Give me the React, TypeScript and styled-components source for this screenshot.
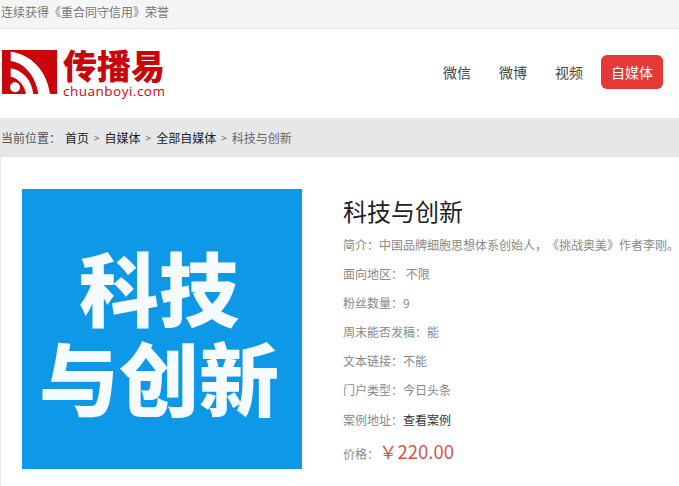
import React from "react";
import styled, { createGlobalStyle } from "styled-components";

const GlobalStyle = createGlobalStyle`
  * {
    box-sizing: border-box;
  }
  body {
    margin: 0;
    background: #ffffff;
    font-family: "Noto Sans CJK SC", "Noto Sans", sans-serif;
    overflow: hidden;
  }
`;

const infoRows = [
  { label: "面向地区：", value: " 不限" },
  { label: "粉丝数量：", value: "9" },
  { label: "周末能否发稿：", value: "能" },
  { label: "文本链接：", value: "不能" },
  { label: "门户类型：", value: "今日头条" },
];

const App = () => {
  return (
    <Page>
      <GlobalStyle />
      <TopBar>连续获得《重合同守信用》荣誉</TopBar>
      <Header>
        <Logo>
          <LogoIcon viewBox="0 0 55 44" aria-hidden="true">
            <rect width="55" height="44" fill="#c9060c" />
            <path d="M8.7 1.7 C28 4 45 20 48 44 H36.3 C34 27 23 13 8.7 11 Z" fill="#fff" />
            <path d="M8.7 18.3 C20 20 30 30 31.3 44 H24 C22.500 35 16 28 8.700 26.700 Z" fill="#fff" />
            <circle cx="13" cy="37.300" r="5" fill="#fff" />
          </LogoIcon>
          <LogoText>
            <LogoName>传播易</LogoName>
            <LogoDomain>chuanboyi.com</LogoDomain>
          </LogoText>
        </Logo>
        <Nav>
          <NavLink>微信</NavLink>
          <NavLink>微博</NavLink>
          <NavLink>视频</NavLink>
          <NavActive>自媒体</NavActive>
        </Nav>
      </Header>
      <Breadcrumb>
        <CrumbLabel>当前位置：</CrumbLabel>
        <CrumbLink>首页</CrumbLink>
        <Sep>&gt;</Sep>
        <CrumbLink>自媒体</CrumbLink>
        <Sep>&gt;</Sep>
        <CrumbLink>全部自媒体</CrumbLink>
        <Sep>&gt;</Sep>
        <CrumbCurrent>科技与创新</CrumbCurrent>
      </Breadcrumb>
      <Card>
        <Cover>
          <CoverLine>科技</CoverLine>
          <CoverLine>与创新</CoverLine>
        </Cover>
        <Info>
          <Title>科技与创新</Title>
          <Intro>简介：中国品牌细胞思想体系创始人，《挑战奥美》作者李刚。</Intro>
          {infoRows.map((row) => (
            <InfoRow key={row.label}>
              {row.label}
              {row.value}
            </InfoRow>
          ))}
          <CaseRow>
            案例地址：<CaseLink>查看案例</CaseLink>
          </CaseRow>
          <PriceRow>
            价格：<Price>￥220.00</Price>
          </PriceRow>
        </Info>
      </Card>
    </Page>
  );
};

export default App;

const Page = styled.div`
  width: 679px;
  height: 486px;
  overflow: hidden;
`;

const TopBar = styled.div`
  height: 29px;
  padding-left: 1px;
  border-bottom: 1px solid #e8e8e8;
  background-color: #f5f5f5;
  color: #777;
  font-size: 12px;
  line-height: 24px;
  white-space: nowrap;
`;

const Header = styled.header`
  display: flex;
  justify-content: space-between;
  align-items: center;
  height: 89px;
  padding: 0 16px 4px 2px;
  background-color: #fff;
`;

const Logo = styled.div`
  display: flex;
  gap: 6px;
  align-items: flex-start;
  margin-top: 4px;
`;

const LogoIcon = styled.svg`
  display: block;
  width: 55px;
  height: 44px;
`;

const LogoText = styled.div`
  display: flex;
  flex-direction: column;
  width: 102px;
`;

const LogoName = styled.div`
  height: 34px;
  color: #c9060c;
  font-family: "Liberation Sans", "Noto Sans CJK SC", sans-serif;
  font-size: 34px;
  font-weight: 900;
  line-height: 34px;
  white-space: nowrap;
`;

const LogoDomain = styled.div`
  color: #c9060c;
  font-family: "Open Sans", sans-serif;
  font-size: 13.5px;
  line-height: 14px;
  letter-spacing: 0.5px;
  white-space: nowrap;
`;

const Nav = styled.nav`
  display: flex;
  align-items: center;
`;

const NavLink = styled.a`
  margin-right: 28px;
  color: #444;
  font-size: 14px;
  line-height: 20px;
`;

const NavActive = styled.a`
  display: block;
  width: 62px;
  height: 34px;
  margin-left: -10px;
  border-radius: 6px;
  background-color: #e53935;
  color: #fff;
  font-size: 14px;
  line-height: 34px;
  text-align: center;
`;

const Breadcrumb = styled.div`
  display: flex;
  align-items: center;
  height: 39px;
  padding: 0 0 0 1px;
  background-color: #e6e7e9;
  font-size: 12px;
  white-space: nowrap;
`;

const CrumbLabel = styled.span`
  width: 64px;
  color: #555;
`;

const CrumbLink = styled.a`
  color: #222;
`;

const CrumbCurrent = styled.span`
  color: #666;
`;

const Sep = styled.span`
  margin: 0 5px;
  color: #666;
  font-size: 10px;
`;

const Card = styled.main`
  display: flex;
  align-items: flex-start;
  height: 329px;
  padding: 32px 0 0 22px;
  border-left: 1px solid #e8e8e8;
  background-color: #fff;
`;

const Cover = styled.div`
  flex: none;
  display: flex;
  flex-direction: column;
  align-items: center;
  width: 280px;
  height: 280px;
  margin-left: -1px;
  padding-top: 59px;
  background-color: #0d99e8;
  color: #f6fbff;
  font-family: "Liberation Sans", "Noto Sans CJK SC", sans-serif;
  font-weight: 900;
`;

const CoverLine = styled.div`
  margin-left: -6px;
  font-size: 80px;
  line-height: 90px;
  white-space: nowrap;
`;

const Info = styled.div`
  display: flex;
  flex-direction: column;
  margin-left: 41px;
  white-space: nowrap;
  text-spacing-trim: space-all;
`;

const Title = styled.h1`
  margin: 7px 0 0;
  color: #222;
  font-size: 24px;
  font-weight: 400;
  line-height: 30px;
`;

const Intro = styled.p`
  margin: 9px 0 0;
  color: #888;
  font-size: 12px;
  line-height: 20px;
`;

const InfoRow = styled.p`
  margin: 9px 0 0;
  color: #888;
  font-size: 12px;
  line-height: 20px;
  white-space: pre;
`;

const CaseRow = styled(InfoRow)`
  margin-top: 10px;
`;

const CaseLink = styled.a`
  color: #333;
`;

const PriceRow = styled.p`
  margin: 7px 0 0;
  color: #888;
  font-size: 12px;
  line-height: 28px;
`;

const Price = styled.span`
  color: #d9534f;
  font-size: 18.5px;
`;
